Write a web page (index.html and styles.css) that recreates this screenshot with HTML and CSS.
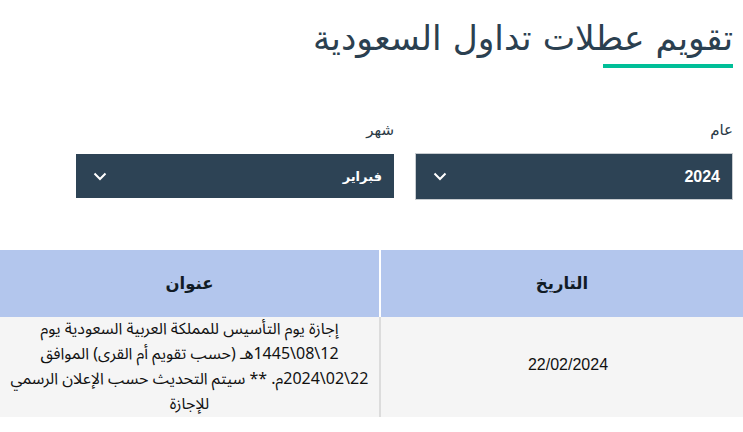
FILE: index.html
```html
<!DOCTYPE html>
<html lang="ar" dir="rtl">
<head>
<meta charset="utf-8">
<link rel="stylesheet" href="styles.css">
</head>
<body>
<div class="page">
  <div class="head">
    <h1 class="title">تقويم عطلات تداول السعودية</h1>
    <div class="bar"></div>
  </div>
  <div class="filters">
    <div class="field">
      <div class="label">عام</div>
      <div class="select year">
        <span class="val">2024</span>
        <svg class="chev" width="14" height="9" viewBox="0 0 14 9"><path d="M1.5 1.5 L7 7 L12.5 1.5" fill="none" stroke="#fff" stroke-width="2"/></svg>
      </div>
    </div>
    <div class="field">
      <div class="label">شهر</div>
      <div class="select month">
        <span class="val">فبراير</span>
        <svg class="chev" width="14" height="9" viewBox="0 0 14 9"><path d="M1.5 1.5 L7 7 L12.5 1.5" fill="none" stroke="#fff" stroke-width="2"/></svg>
      </div>
    </div>
  </div>
</div>
<table class="tbl">
  <thead>
    <tr><th class="c-date">التاريخ</th><th class="c-title">عنوان</th></tr>
  </thead>
  <tbody>
    <tr>
      <td class="c-date">22/02/2024</td>
      <td class="c-title">إجازة يوم التأسيس للمملكة العربية السعودية يوم 12\08\1445هـ (حسب تقويم أم القرى) الموافق 22\02\2024م. ** سيتم التحديث حسب الإعلان الرسمي للإجازة</td>
    </tr>
  </tbody>
</table>
</body>
</html>
```
FILE: styles.css
```css
html, body { margin: 0; padding: 0; background: #fff; }
body { font-family: "DejaVu Sans", "Noto Sans", sans-serif; color: #1f2d3a; width: 743px; overflow: hidden; }
.page { padding: 0 10px 0 10px; }
.head { display: flex; flex-direction: column; align-items: flex-start; padding-top: 16px; }
.title { margin: 0; font-weight: normal; font-size: 34.5px; line-height: 44px; color: #2b4050; }
.bar { width: 130px; height: 4px; background: #00bf98; margin-top: 4px; }
.filters { display: flex; gap: 21px; margin-top: 52px; }
.field { display: flex; flex-direction: column; width: 318px; }
.label { font-size: 15px; line-height: 20px; color: #2b3a46; margin-bottom: 14px; }
.select { background: #2d4355; color: #fff; display: flex; align-items: center; justify-content: space-between; padding: 0 12px 0 17px; box-sizing: border-box; }
.select.year { border: 1px solid #c8ccd0; height: 47px; margin-top: -1px; }
.select.month { height: 44px; }
.val { font-family: "Liberation Sans", "DejaVu Sans", sans-serif; font-weight: bold; font-size: 16px; }
.month .val { font-family: "DejaVu Sans", sans-serif; font-weight: bold; font-size: 13px; }
.chev { display: block; }
.tbl { margin-top: 50px; width: 743px; border-collapse: collapse; table-layout: fixed; }
.tbl th { background: #b3c6ed; height: 67px; font-size: 16.5px; font-weight: bold; color: #111b25; padding: 0; }
.tbl th.c-date { width: 362px; border-left: 2px solid #fff; }
.tbl td { background: #f5f5f5; font-size: 16px; line-height: 25px; color: #111; text-align: center; padding: 0 8px; vertical-align: middle; }
.tbl td.c-title { font-family: "Noto Sans Arabic", "Noto Sans", "DejaVu Sans", sans-serif; }
.tbl td.c-date { border-left: 2px solid #dcdcdc; padding: 0 4px 6px 16px; font-family: "Liberation Sans", sans-serif; }
```
